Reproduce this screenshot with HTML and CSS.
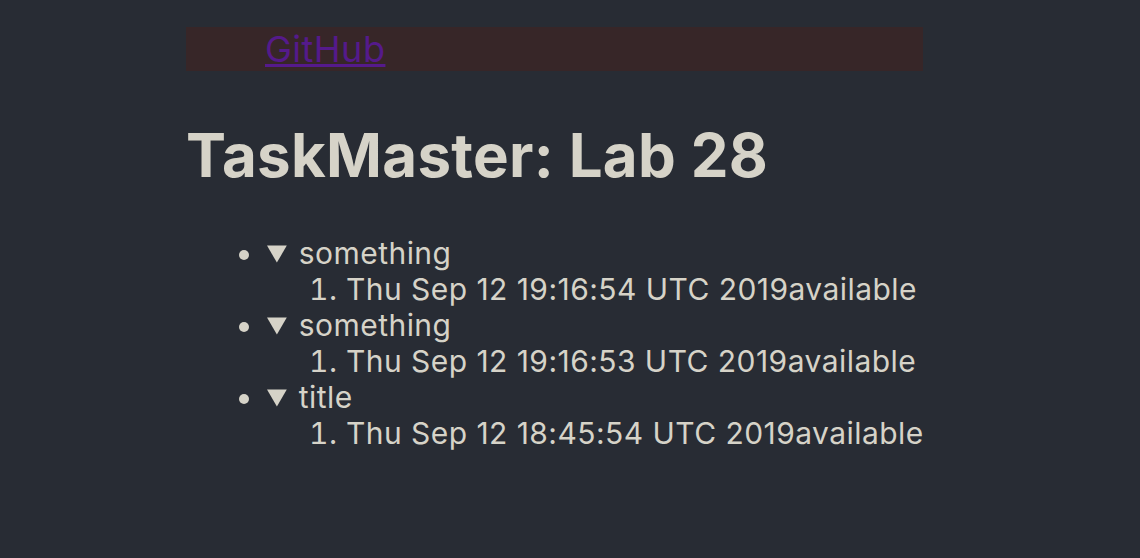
FILE: index.html
```html
<!DOCTYPE html>
<html>
<head>
<meta charset="utf-8">
<title>TaskMaster</title>
<link rel="stylesheet" href="styles.css">
</head>
<body>
<div class="page">
  <header class="site-header">
    <ul class="nav">
      <li><a href="#">GitHub</a></li>
    </ul>
  </header>
  <h1 class="title">TaskMaster: Lab 28</h1>
  <ul class="tasks">
    <li>
      <details open>
        <summary>something</summary>
        <ol class="history">
          <li>Thu Sep 12 19:16:54 UTC 2019available</li>
        </ol>
      </details>
    </li>
    <li>
      <details open>
        <summary>something</summary>
        <ol class="history">
          <li>Thu Sep 12 19:16:53 UTC 2019available</li>
        </ol>
      </details>
    </li>
    <li>
      <details open>
        <summary>title</summary>
        <ol class="history">
          <li>Thu Sep 12 18:45:54 UTC 2019available</li>
        </ol>
      </details>
    </li>
  </ul>
</div>
</body>
</html>
```
FILE: styles.css
```css
html, body {
  margin: 0;
  padding: 0;
  background: #282c34;
}
body {
  font-family: Inter, "Noto Sans", sans-serif;
  color: #d6d3c8;
}
.page {
  width: 737px;
  margin-left: 186px;
  padding-top: 27px;
}
.site-header {
  background: #372628;
}
.nav {
  list-style: none;
  margin: 0;
  padding: 0 0 0 79px;
  font-size: 36px;
  letter-spacing: 0.5px;
}
.nav a {
  color: #551a8b;
  text-decoration: underline;
}
.title {
  font-size: 60px;
  font-weight: 700;
  margin: 48px 0 44px 0;
  color: #d6d3c8;
  letter-spacing: 0.3px;
}
.tasks {
  margin: 0;
  padding-left: 79px;
  font-size: 30px;
  letter-spacing: 0.45px;
}
.tasks details {
  margin: 0;
}
.tasks summary {
  cursor: pointer;
  padding-left: 2px;
}
.history {
  margin: 0;
  padding-left: 81px;
  white-space: nowrap;
}
```
